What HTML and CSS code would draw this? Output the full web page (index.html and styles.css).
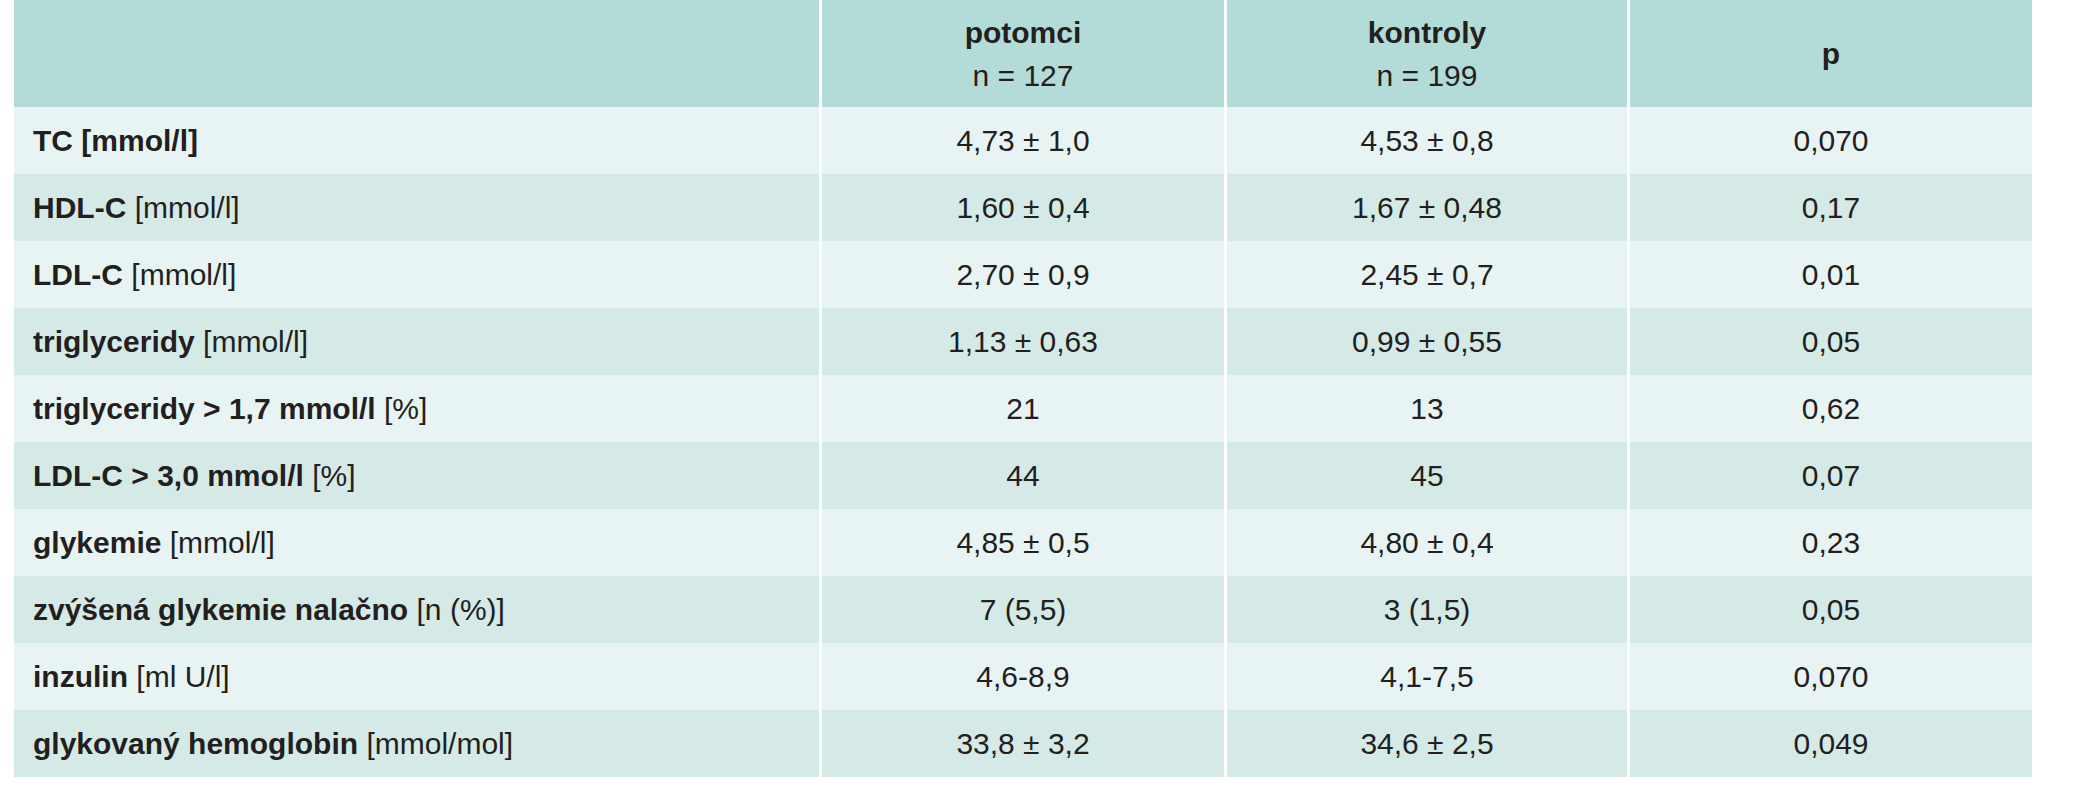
FILE: index.html
```html
<!DOCTYPE html>
<html lang="cs">
<head>
<meta charset="utf-8">
<title>Tabulka</title>
<link rel="stylesheet" href="styles.css">
</head>
<body>
<table class="data">
  <colgroup>
    <col class="c-label">
    <col class="c-val">
    <col class="c-val2">
    <col class="c-val">
  </colgroup>
  <thead>
    <tr>
      <th class="label"></th>
      <th><b>potomci</b><br><span class="n">n = 127</span></th>
      <th><b>kontroly</b><br><span class="n">n = 199</span></th>
      <th><b>p</b></th>
    </tr>
  </thead>
  <tbody>
    <tr><td class="label"><b>TC [mmol/l]</b></td><td>4,73 ± 1,0</td><td>4,53 ± 0,8</td><td>0,070</td></tr>
    <tr><td class="label"><b>HDL-C</b> [mmol/l]</td><td>1,60 ± 0,4</td><td>1,67 ± 0,48</td><td>0,17</td></tr>
    <tr><td class="label"><b>LDL-C</b> [mmol/l]</td><td>2,70 ± 0,9</td><td>2,45 ± 0,7</td><td>0,01</td></tr>
    <tr><td class="label"><b>triglyceridy</b> [mmol/l]</td><td>1,13 ± 0,63</td><td>0,99 ± 0,55</td><td>0,05</td></tr>
    <tr><td class="label"><b>triglyceridy &gt; 1,7 mmol/l</b> [%]</td><td>21</td><td>13</td><td>0,62</td></tr>
    <tr><td class="label"><b>LDL-C &gt; 3,0 mmol/l</b> [%]</td><td>44</td><td>45</td><td>0,07</td></tr>
    <tr><td class="label"><b>glykemie</b> [mmol/l]</td><td>4,85 ± 0,5</td><td>4,80 ± 0,4</td><td>0,23</td></tr>
    <tr><td class="label"><b>zvýšená glykemie nalačno</b> [n (%)]</td><td>7 (5,5)</td><td>3 (1,5)</td><td>0,05</td></tr>
    <tr><td class="label"><b>inzulin</b> [ml U/l]</td><td>4,6-8,9</td><td>4,1-7,5</td><td>0,070</td></tr>
    <tr><td class="label"><b>glykovaný hemoglobin</b> [mmol/mol]</td><td>33,8 ± 3,2</td><td>34,6 ± 2,5</td><td>0,049</td></tr>
  </tbody>
</table>
</body>
</html>
```

FILE: styles.css
```css
html, body {
  margin: 0;
  padding: 0;
  background: #ffffff;
}

body {
  font-family: "Liberation Sans", Arial, sans-serif;
  font-size: 30px;
  color: #231f20;
}

.data {
  margin-left: 14px;
  width: 2018px;
  table-layout: fixed;
  border-collapse: separate;
  border-spacing: 0;
}

.c-label { width: 805px; }
.c-val { width: 405px; }
.c-val2 { width: 403px; }

.data th,
.data td {
  padding: 0;
  text-align: center;
  vertical-align: middle;
  font-weight: normal;
  border-left: 3px solid #ffffff;
}

.data th.label,
.data td.label {
  border-left: 0;
  text-align: left;
  padding-left: 19px;
}

.data b {
  font-weight: 700;
}

.data thead th {
  background: #b3dcd9;
  height: 107px;
  line-height: 43px;
}

.data tbody td {
  height: 67px;
  line-height: 34px;
}

.data tbody tr:nth-child(odd) td {
  background: #e8f4f3;
}

.data tbody tr:nth-child(even) td {
  background: #d5e9e7;
}
```
